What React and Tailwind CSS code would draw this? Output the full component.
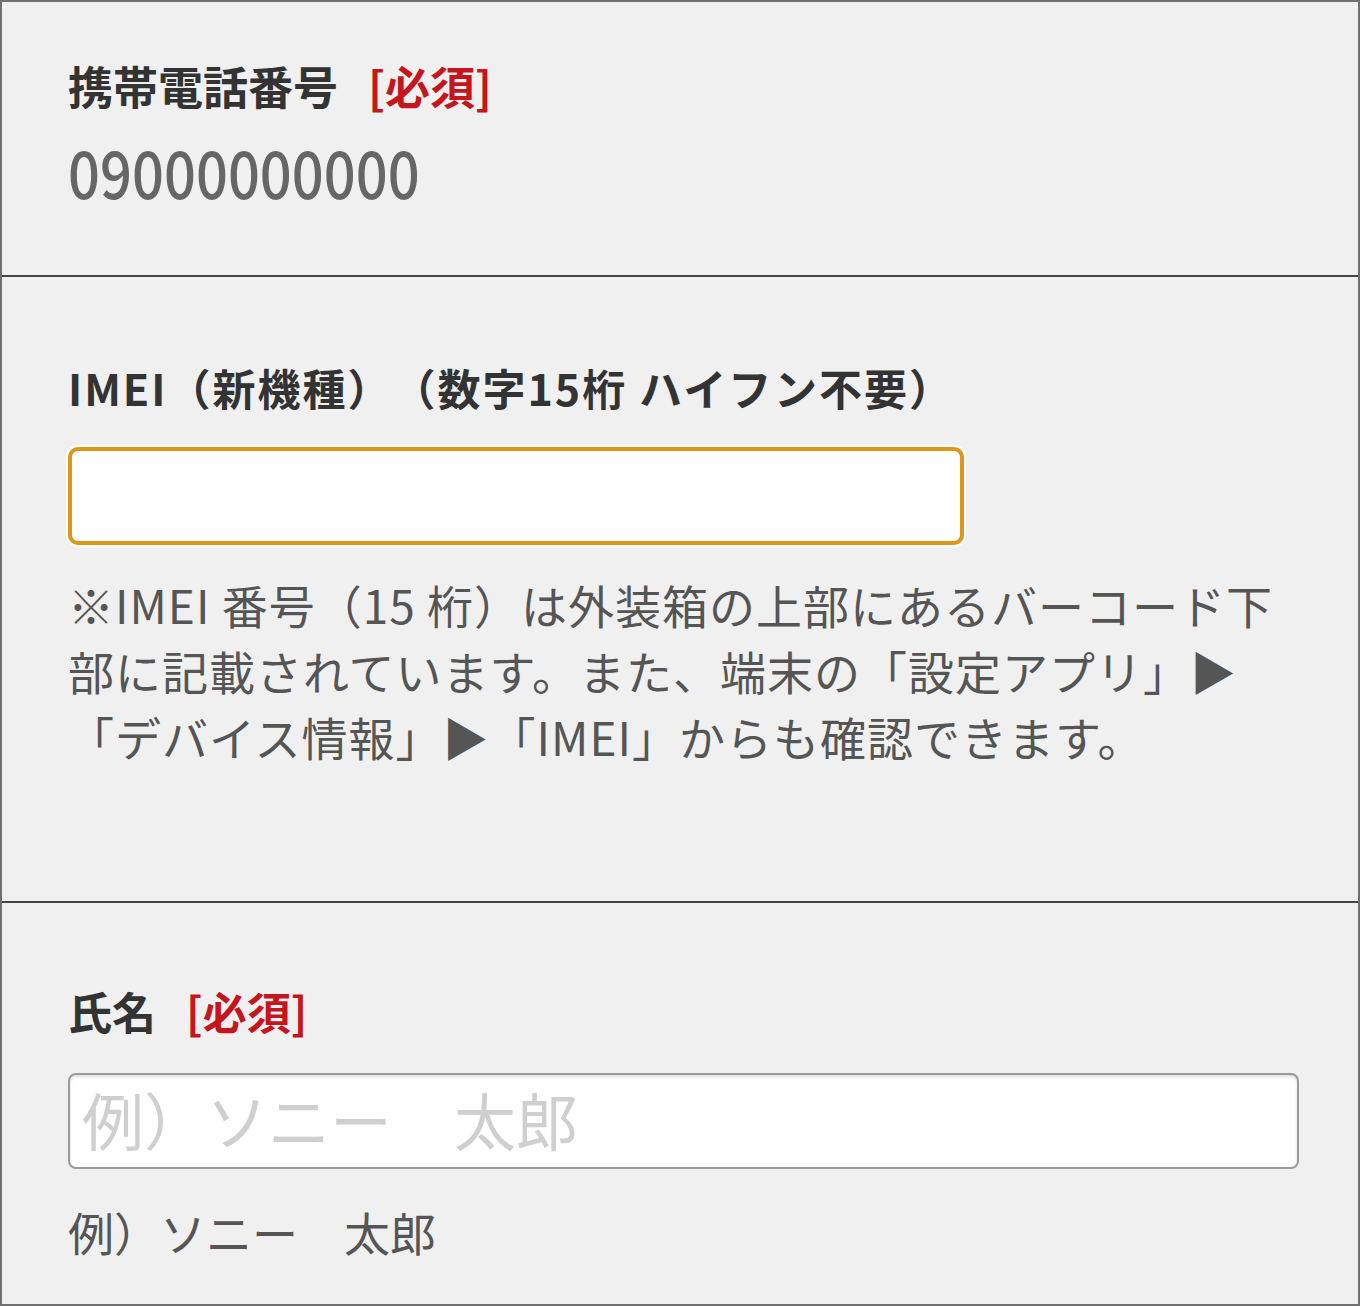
const jp = { fontFamily: '"Noto Sans CJK JP", "Noto Sans", sans-serif' };

function Required() {
  return <span className="ml-[30px] text-[#c4161c]">[必須]</span>;
}

export default function App() {
  return (
    <div
      className="w-[1360px] h-[1306px] bg-[#f0f0f0] border-2 border-[#6f6f6f] flex flex-col overflow-hidden [text-spacing-trim:space-all]"
      style={jp}
    >
      <section className="h-[275px] px-[66px] pt-[52px] border-b-2 border-[#444]">
        <h2 className="text-[45px] leading-[64px] font-bold text-[#333]">
          携帯電話番号<Required />
        </h2>
        <div className="mt-[12px] text-[66px] leading-[80px] font-medium text-[#666] origin-left scale-x-[0.85] w-fit">
          09000000000
        </div>
      </section>

      <section className="h-[626px] px-[66px] pt-[80px] border-b-2 border-[#444]">
        <h2 className="text-[43px] leading-[60px] font-bold text-[#333] tracking-[2px] whitespace-nowrap">
          IMEI（新機種）（数字15桁 ハイフン不要）
        </h2>
        <div className="mt-[30px] w-[896px] h-[98px] rounded-[10px] ring-2 ring-white">
          <input
            type="text"
            className="w-full h-full bg-white rounded-[10px] border-4 border-[#e0961a] outline-none px-3"
          />
        </div>
        <p className="mt-[26px] text-[46px] leading-[66px] text-[#555] tracking-[1px] whitespace-nowrap">
          ※IMEI 番号（15 桁）は外装箱の上部にあるバーコード下
          <br />
          部に記載されています。また、端末の「設定アプリ」▶
          <br />
          「デバイス情報」▶「IMEI」からも確認できます。
        </p>
      </section>

      <section className="flex-1 px-[66px] pt-[76px]">
        <h2 className="text-[44px] leading-[64px] font-bold text-[#333]">
          氏名<Required />
        </h2>
        <input
          type="text"
          placeholder="例）ソニー　太郎"
          className="mt-[30px] w-[1231px] h-[96px] bg-white rounded-[8px] border-2 border-[#9a9a9a] shadow-[inset_0_2px_3px_rgba(0,0,0,0.12)] outline-none px-[12px] pb-[4px] text-[62px] text-[#333] placeholder:text-[#cfcfcf]"
        />
        <p className="mt-[32px] text-[46px] leading-[60px] text-[#555]">例）ソニー　太郎</p>
      </section>
    </div>
  );
}
